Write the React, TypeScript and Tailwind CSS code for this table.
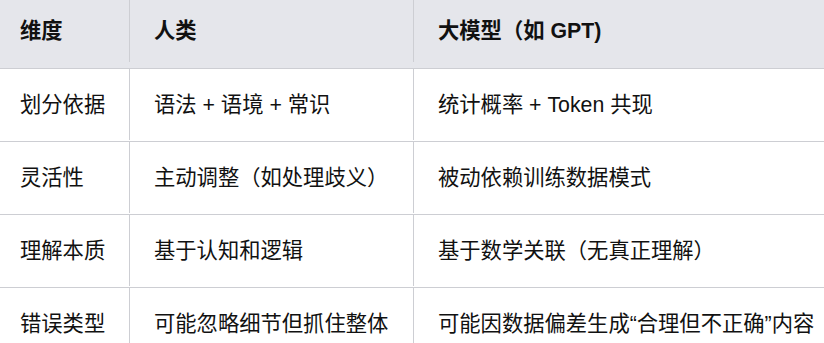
const rows = [
  ['划分依据', '语法 + 语境 + 常识', '统计概率 + Token 共现'],
  ['灵活性', '主动调整（如处理歧义）', '被动依赖训练数据模式'],
  ['理解本质', '基于认知和逻辑', '基于数学关联（无真正理解）'],
  ['错误类型', '可能忽略细节但抓住整体', '可能因数据偏差生成“合理但不正确”内容'],
];

function Row({ cells, head }: { cells: string[]; head?: boolean }) {
  const base = head
    ? 'h-[69px] pb-[6px] font-bold bg-[#e5e6eb]'
    : 'h-[73px] pb-[1px]';
  return (
    <div className={`flex border-b border-[#cdced3] ${base}`}>
      <div className="w-[130px] shrink-0 flex items-center pl-[20px] border-r border-[#cdced3]">
        {cells[0]}
      </div>
      <div className="w-[284px] shrink-0 flex items-center pl-[24px] border-r border-[#cdced3]">
        {cells[1]}
      </div>
      <div className="flex-1 flex items-center pl-[24px] whitespace-nowrap">
        {cells[2]}
      </div>
    </div>
  );
}

export default function App() {
  return (
    <div className="w-[824px] h-[343px] overflow-hidden bg-white text-[#111111] text-[21.3px] leading-[30px] font-['Liberation_Sans','Noto_Sans_CJK_SC',sans-serif]">
      {/* header */}
      <Row head cells={['维度', '人类', '大模型（如 GPT)']} />

      {/* body rows */}
      {rows.map((r) => (
        <Row key={r[0]} cells={r} />
      ))}
    </div>
  );
}
